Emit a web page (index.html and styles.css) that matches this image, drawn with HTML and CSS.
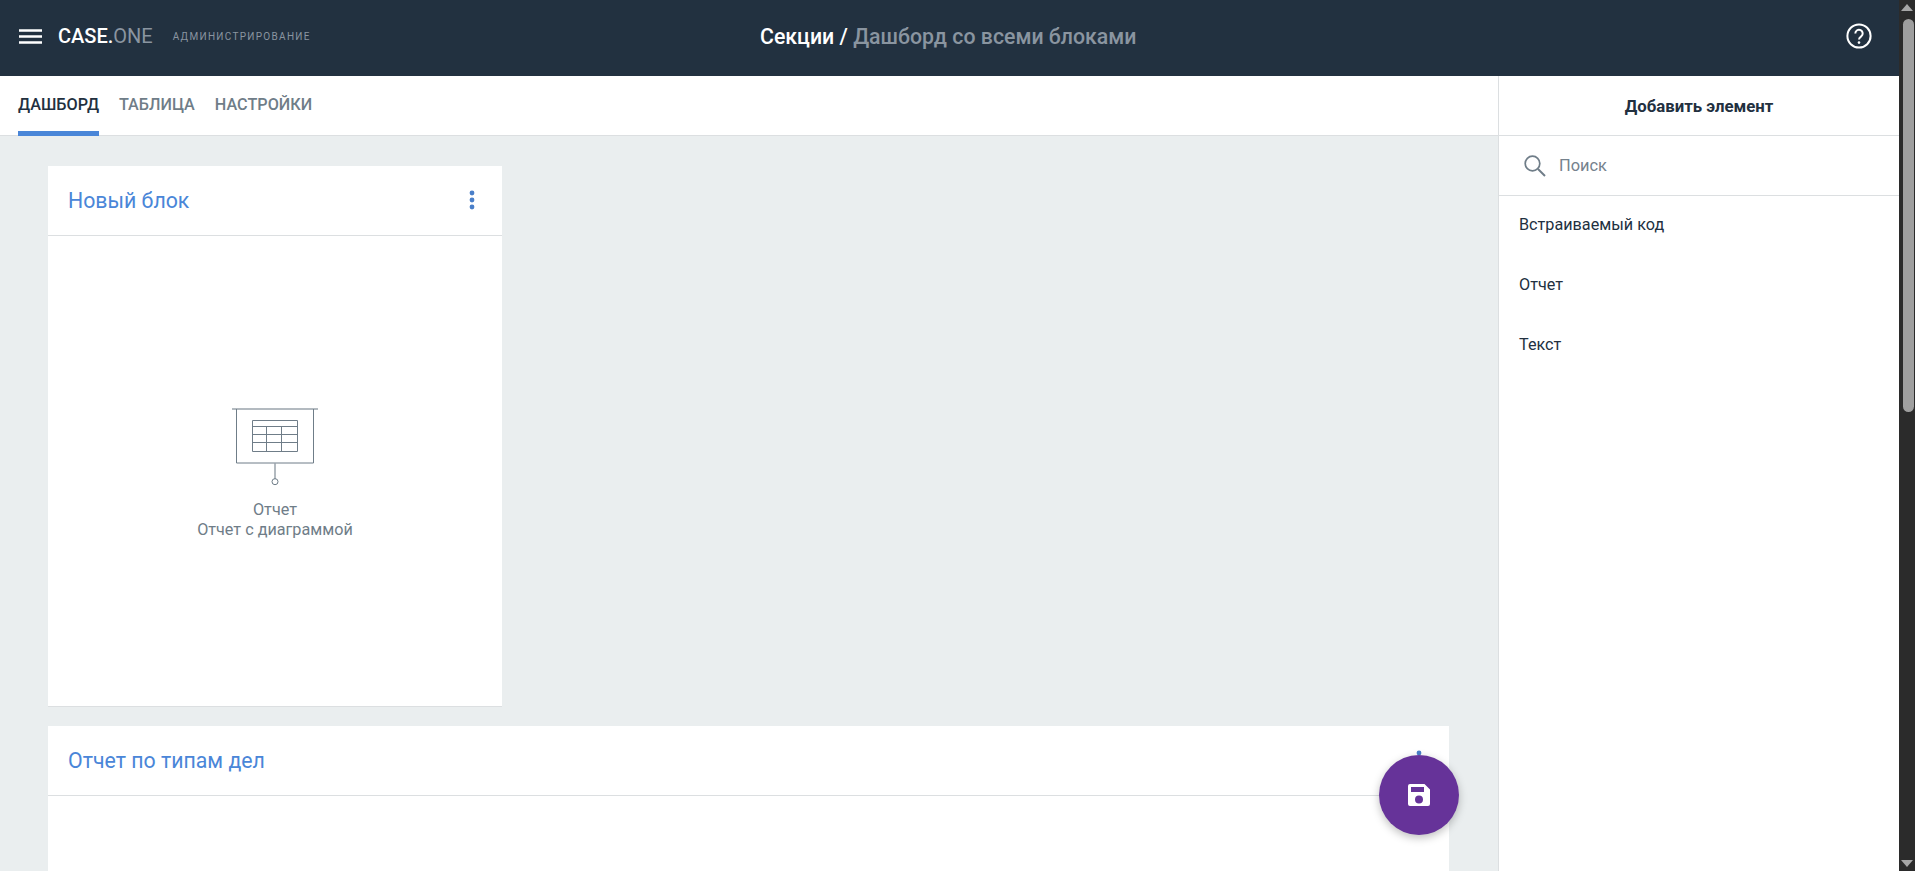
FILE: index.html
```html
<!DOCTYPE html>
<html lang="ru">
<head>
    <meta charset="UTF-8">
    <title>Дашборд со всеми блоками</title>
    <link rel="stylesheet" href="styles.css">
</head>
<body>
    <div class="app">
        <header class="topbar">
            <div class="brand">
                <svg class="menu-icon" width="23" height="15" viewBox="0 0 23 15">
                    <path d="M0 1.500h23M0 7.500h23M0 13.500h23" stroke="#fff" stroke-width="2.600"/>
                </svg>
                <span class="logo">CASE.<span class="logo-dim">ONE</span></span>
                <span class="logo-sub">АДМИНИСТРИРОВАНИЕ</span>
            </div>
            <div class="crumbs">Секции / <span class="crumbs-dim">Дашборд со всеми блоками</span></div>
            <svg class="help-icon" width="28" height="28" viewBox="0 0 28 28">
                <circle cx="14" cy="14" r="11.600" fill="none" stroke="#fff" stroke-width="2"/>
                <path d="M10.300 11.400a3.700 3.700 0 1 1 5.900 3c-1.400 1-2.200 1.600-2.200 3.200" fill="none" stroke="#fff" stroke-width="2"/>
                <circle cx="14" cy="20.600" r="1.300" fill="#fff"/>
            </svg>
        </header>

        <div class="workspace">
            <main class="content">
                <nav class="tabs">
                    <a class="tab tab-active">ДАШБОРД</a>
                    <a class="tab">ТАБЛИЦА</a>
                    <a class="tab">НАСТРОЙКИ</a>
                </nav>

                <div class="board">
                    <section class="card card-small">
                        <div class="card-head">
                            <h2>Новый блок</h2>
                            <svg class="dots" width="6" height="20" viewBox="0 0 6 20">
                                <circle cx="3" cy="3" r="2.400"/>
                                <circle cx="3" cy="10" r="2.400"/>
                                <circle cx="3" cy="17" r="2.400"/>
                            </svg>
                        </div>
                        <div class="card-body">
                            <svg class="report-icon" width="86" height="82" viewBox="0 0 86 82">
                                <path class="line-light" d="M0 1h86"/>
                                <path class="line" d="M4.500 1v54h77V1"/>
                                <path class="line" d="M20.500 12.500h45v31h-45zM20.500 18.500h45M20.500 26.500h45M20.500 34.500h45M34.500 18.500v25M49.500 18.500v25"/>
                                <path class="line-light" d="M43 55v16"/>
                                <circle class="line" cx="43" cy="73.700" r="3"/>
                            </svg>
                            <p class="report-text">Отчет<br>Отчет с диаграммой</p>
                        </div>
                    </section>

                    <section class="card card-wide">
                        <div class="card-head">
                            <h2>Отчет по типам дел</h2>
                            <svg class="dots" width="6" height="20" viewBox="0 0 6 20">
                                <circle cx="3" cy="3" r="2.400"/>
                                <circle cx="3" cy="10" r="2.400"/>
                                <circle cx="3" cy="17" r="2.400"/>
                            </svg>
                        </div>
                    </section>
                </div>
            </main>

            <aside class="panel">
                <div class="panel-title">Добавить элемент</div>
                <div class="panel-search">
                    <svg width="24" height="24" viewBox="0 0 24 24">
                        <circle cx="9.500" cy="9.500" r="7.300" fill="none" stroke="#6f7d88" stroke-width="1.700"/>
                        <path d="M15 15l7 7" stroke="#6f7d88" stroke-width="1.900"/>
                    </svg>
                    <span>Поиск</span>
                </div>
                <ul class="panel-list">
                    <li>Встраиваемый код</li>
                    <li>Отчет</li>
                    <li>Текст</li>
                </ul>
            </aside>
        </div>
    </div>

    <div class="scrollbar">
        <div class="scroll-arrow"></div>
        <div class="scroll-thumb"></div>
        <div class="scroll-arrow-down"></div>
    </div>

    <button class="fab">
        <svg width="24" height="24" viewBox="0 0 24 24">
            <path fill="#fff" d="M1 3a2 2 0 0 1 2-2h14.500L23 6.500V21a2 2 0 0 1-2 2H3a2 2 0 0 1-2-2zM4 4v5h13V4zM12 12.500a4 4 0 1 0 0 8 4 4 0 0 0 0-8z" fill-rule="evenodd"/>
        </svg>
    </button>
</body>
</html>
```

FILE: styles.css
```css
html, body {
    height: 100%;
    margin: 0;
    overflow: hidden;
}
body {
    font-family: Roboto, "Liberation Sans", sans-serif;
    background-color: #fff;
    color: #22303f;
}
.app {
    display: flex;
    flex-direction: column;
    height: 100%;
    margin-right: 16px;
}

/* Шапка */
.topbar {
    display: flex;
    align-items: center;
    justify-content: space-between;
    position: relative;
    flex: 0 0 76px;
    padding: 0 26px 4px 19px;
    box-sizing: border-box;
    background-color: #223140;
    color: #fff;
}
.brand {
    display: flex;
    align-items: center;
}
.logo {
    margin-left: 16px;
    font-size: 20px;
    font-weight: 500;
}
.logo-dim {
    color: #8a95a0;
    font-weight: 400;
}
.logo-sub {
    margin-left: 20px;
    font-size: 10px;
    letter-spacing: 1.300px;
    color: #8a95a0;
}
.crumbs {
    position: absolute;
    left: 760px;
    top: 24px;
    font-size: 21.300px;
    font-weight: 500;
}
.crumbs-dim {
    color: #8a95a0;
}

/* Рабочая область */
.workspace {
    display: flex;
    flex: 1;
    min-height: 0;
}
.content {
    flex: 1;
    min-width: 0;
    display: flex;
    flex-direction: column;
    background-color: #eaeeef;
}
.tabs {
    display: flex;
    gap: 20px;
    flex: 0 0 60px;
    box-sizing: border-box;
    padding-left: 18px;
    background-color: #fff;
    border-bottom: 1px solid #dcdfe1;
}
.tab {
    font-size: 16.200px;
    font-weight: 500;
    line-height: 57px;
    color: #6f7d88;
}
.tab-active {
    height: 60px;
    margin-bottom: -1px;
    box-sizing: border-box;
    color: #22303f;
    border-bottom: 5px solid #4a86d8;
}

/* Карточки */
.board {
    flex: 1;
    overflow: hidden;
    padding: 30px 49px 0 48px;
}
.card {
    background-color: #fff;
}
.card-small {
    width: 454px;
    height: 541px;
    margin-bottom: 19px;
    box-sizing: border-box;
    border-bottom: 1px solid #dcdfe1;
    display: flex;
    flex-direction: column;
}
.card-wide {
    height: 300px;
}
.card-head {
    display: flex;
    align-items: center;
    justify-content: space-between;
    height: 70px;
    box-sizing: border-box;
    padding: 0 27px 1px 20px;
    border-bottom: 1px solid #dcdfe1;
}
.card-head h2 {
    margin: 0;
    font-size: 21.300px;
    font-weight: 400;
    color: #4a86d8;
}
.dots {
    fill: #4a7fc9;
}
.card-body {
    flex: 1;
    text-align: center;
    padding-top: 172px;
    color: #6f7d88;
}
.report-icon {
    display: block;
    margin: 0 auto;
}
.line, .line-light {
    fill: none;
    stroke: #6f7d88;
    stroke-width: 1;
}
.line-light {
    stroke: #9aa3ab;
    stroke-width: 1.500;
}
.report-text {
    margin: 10px 0 0;
    font-size: 16.200px;
    line-height: 20px;
}

/* Правая панель */
.panel {
    flex: 0 0 401px;
    box-sizing: border-box;
    background-color: #fff;
    border-left: 1px solid #dcdfe1;
}
.panel-title {
    height: 60px;
    box-sizing: border-box;
    border-bottom: 1px solid #dcdfe1;
    text-align: center;
    line-height: 60px;
    font-size: 16.800px;
    font-weight: 700;
    color: #22303f;
}
.panel-search {
    display: flex;
    align-items: center;
    gap: 12px;
    height: 60px;
    box-sizing: border-box;
    padding-left: 24px;
    border-bottom: 1px solid #dcdfe1;
    font-size: 16.400px;
    color: #75828d;
}
.panel-list {
    list-style: none;
    margin: 0;
    padding: 0;
}
.panel-list li {
    height: 60px;
    padding-left: 20px;
    font-size: 16.200px;
    line-height: 58px;
}

/* Полоса прокрутки */
.scrollbar {
    position: fixed;
    top: 0;
    right: 0;
    bottom: 0;
    width: 16px;
    background-color: #2b2b2b;
    display: flex;
    flex-direction: column;
}
.scroll-arrow {
    width: 0;
    margin: 4px auto 0;
    border-left: 6px solid transparent;
    border-right: 6px solid transparent;
    border-bottom: 7px solid #a6a6a6;
}
.scroll-thumb {
    height: 393px;
    margin: 8px 1px 0 4px;
    border-radius: 6px;
    background-color: #9f9f9f;
}
.scroll-arrow-down {
    width: 0;
    margin: auto auto 4px;
    border-left: 6px solid transparent;
    border-right: 6px solid transparent;
    border-top: 7px solid #a6a6a6;
}

/* Кнопка сохранения */
.fab {
    position: fixed;
    left: 1379px;
    top: 755px;
    width: 80px;
    height: 80px;
    padding: 0;
    border: none;
    border-radius: 50%;
    background-color: #663399;
    box-shadow: 0 3px 8px rgba(0, 0, 0, 0.25);
    display: flex;
    align-items: center;
    justify-content: center;
}
```
